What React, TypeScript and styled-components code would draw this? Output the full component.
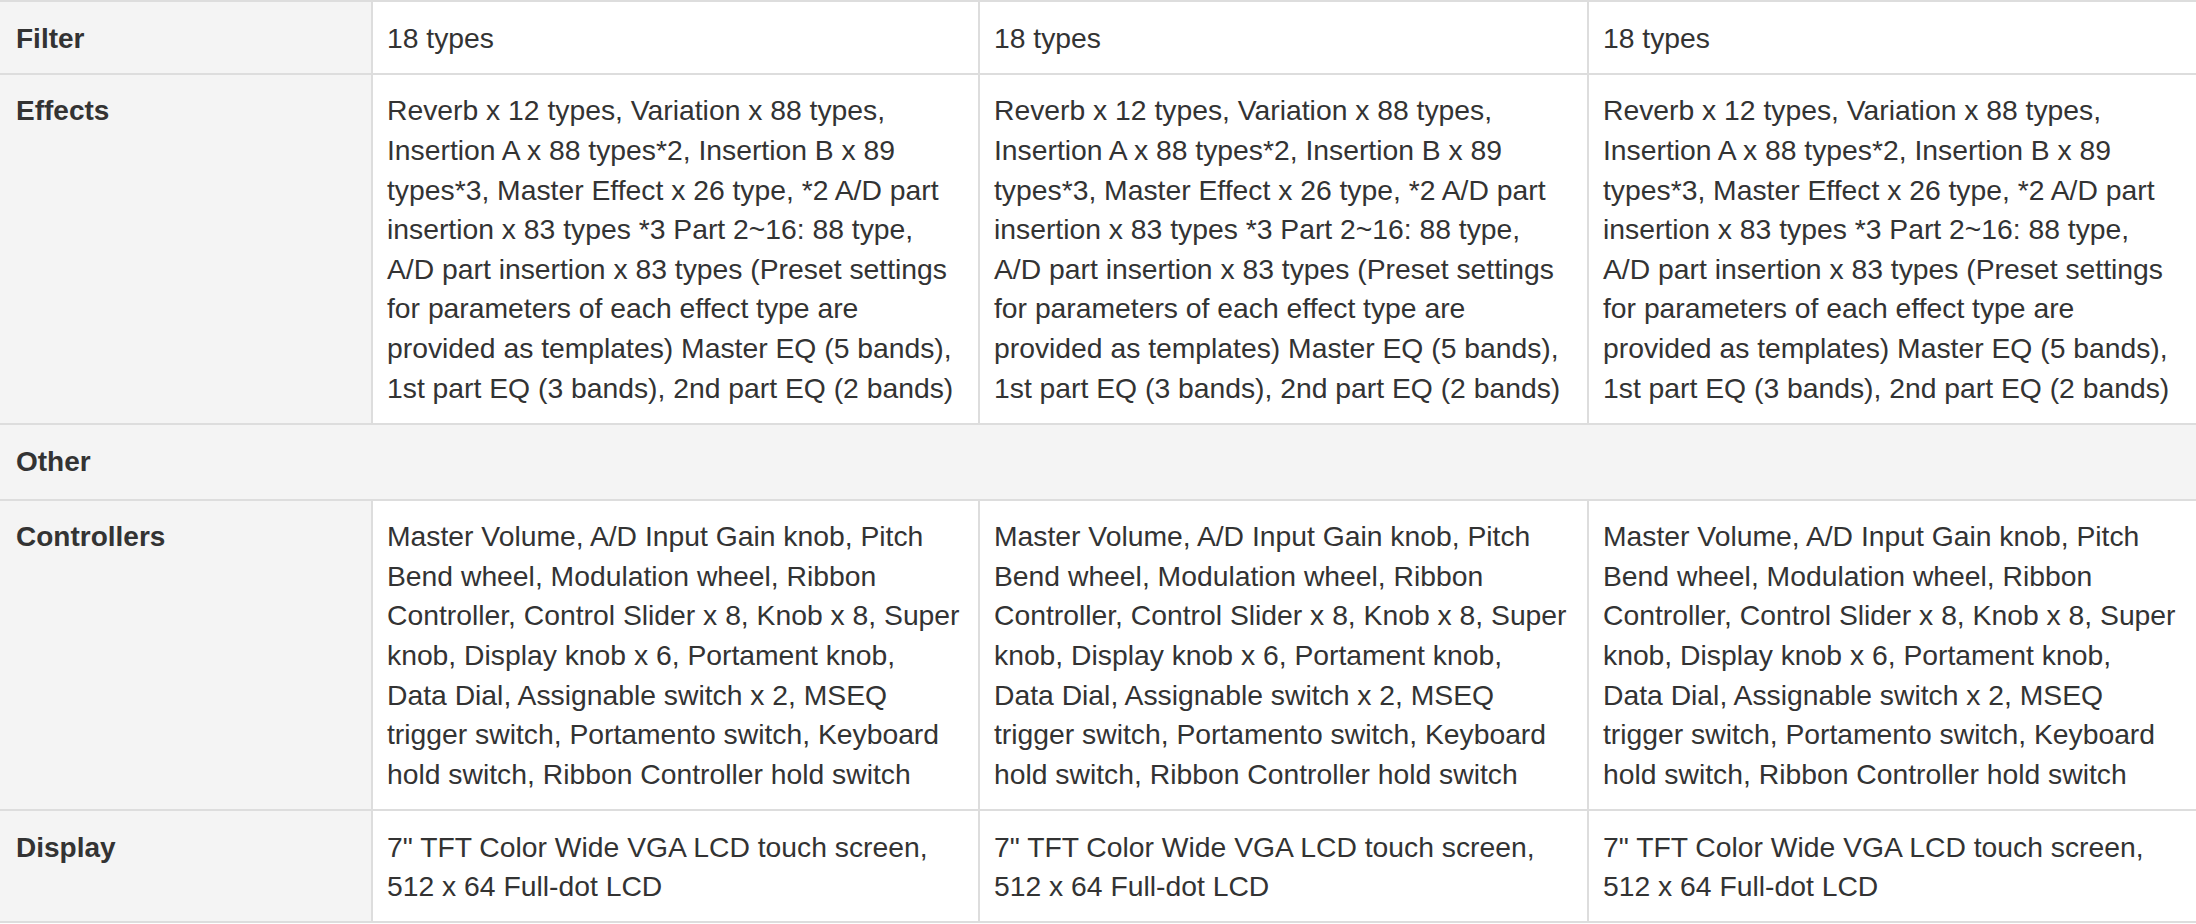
import React from "react";
import styled, { createGlobalStyle } from "styled-components";

const GlobalStyle = createGlobalStyle`
  html, body {
    margin: 0;
    padding: 0;
    background: #ffffff;
  }
  body {
    font-family: "Liberation Sans", Arial, Helvetica, sans-serif;
    color: #333333;
  }
`;

const SpecGrid = styled.div`
  display: grid;
  grid-template-columns: 371px 605px 607px 607px;
  gap: 2px;
  padding: 2px 0;
  background: #dddddd;
  width: 2196px;
  box-sizing: border-box;
`;

const LabelCell = styled.div<{ $span?: boolean }>`
  background: #f4f4f4;
  font-weight: 700;
  font-size: 28px;
  line-height: 39.6px;
  color: #333333;
  grid-column: ${(p) => (p.$span ? "1 / -1" : "auto")};
  padding: ${(p) => (p.$span ? "17.2px 16px 17.2px" : "16.6px 16px 14.6px")};
`;

const ValueCell = styled.div`
  background: #ffffff;
  font-weight: 400;
  font-size: 28.3px;
  line-height: 39.6px;
  color: #333333;
  padding: 16.6px 14px 14.6px;
  white-space: pre-line;
`;

const effects = [
  "Reverb x 12 types, Variation x 88 types,",
  "Insertion A x 88 types*2, Insertion B x 89",
  "types*3, Master Effect x 26 type, *2 A/D part",
  "insertion x 83 types *3 Part 2~16: 88 type,",
  "A/D part insertion x 83 types (Preset settings",
  "for parameters of each effect type are",
  "provided as templates) Master EQ (5 bands),",
  "1st part EQ (3 bands), 2nd part EQ (2 bands)",
].join("\n");

const controllers = [
  "Master Volume, A/D Input Gain knob, Pitch",
  "Bend wheel, Modulation wheel, Ribbon",
  "Controller, Control Slider x 8, Knob x 8, Super",
  "knob, Display knob x 6, Portament knob,",
  "Data Dial, Assignable switch x 2, MSEQ",
  "trigger switch, Portamento switch, Keyboard",
  "hold switch, Ribbon Controller hold switch",
].join("\n");

const display = ["7\" TFT Color Wide VGA LCD touch screen,", "512 x 64 Full-dot LCD"].join("\n");

type Row = { label: string; value?: string };

const rows: Row[] = [
  { label: "Filter", value: "18 types" },
  { label: "Effects", value: effects },
  { label: "Other" },
  { label: "Controllers", value: controllers },
  { label: "Display", value: display },
];

export default function App() {
  return (
    <>
      <GlobalStyle />
      <SpecGrid>
        {rows.map((r) =>
          r.value === undefined ? (
            <LabelCell key={r.label} $span>
              {r.label}
            </LabelCell>
          ) : (
            <React.Fragment key={r.label}>
              <LabelCell>{r.label}</LabelCell>
              <ValueCell>{r.value}</ValueCell>
              <ValueCell>{r.value}</ValueCell>
              <ValueCell>{r.value}</ValueCell>
            </React.Fragment>
          )
        )}
      </SpecGrid>
    </>
  );
}
